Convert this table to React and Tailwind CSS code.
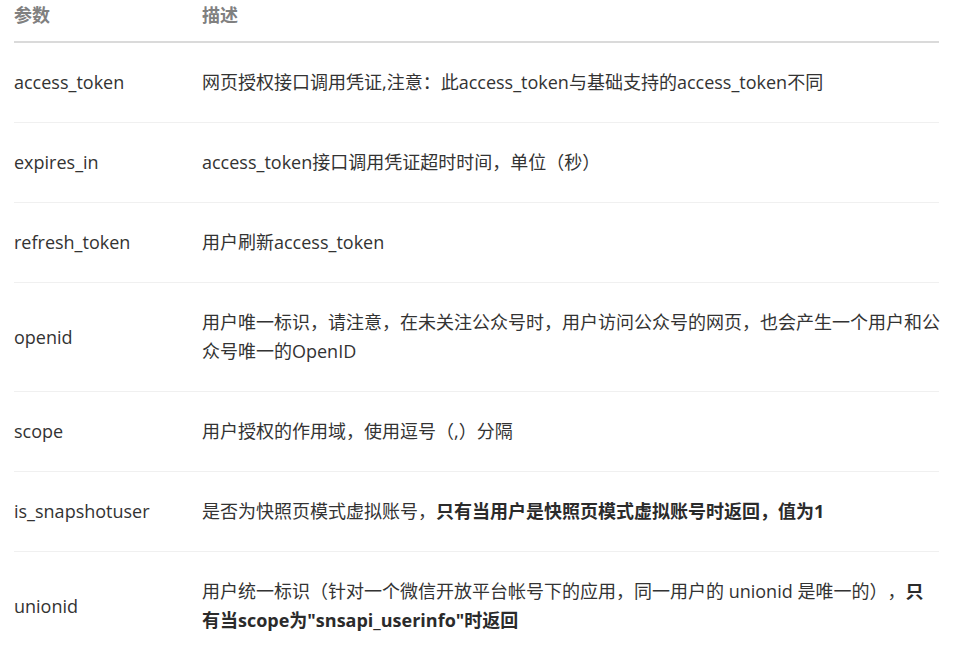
import React from "react";

const rows = [
  {
    name: "access_token",
    desc: <>网页授权接口调用凭证,注意：此access_token与基础支持的access_token不同</>,
  },
  { name: "expires_in", desc: <>access_token接口调用凭证超时时间，单位（秒）</> },
  { name: "refresh_token", desc: <>用户刷新access_token</> },
  {
    name: "openid",
    desc: <>用户唯一标识，请注意，在未关注公众号时，用户访问公众号的网页，也会产生一个用户和公众号唯一的OpenID</>,
  },
  { name: "scope", desc: <>用户授权的作用域，使用逗号（,）分隔</> },
  {
    name: "is_snapshotuser",
    desc: (
      <>
        是否为快照页模式虚拟账号，<b className="font-bold text-[#2b2b2b]">只有当用户是快照页模式虚拟账号时返回，值为1</b>
      </>
    ),
  },
  {
    name: "unionid",
    desc: (
      <>
        用户统一标识（针对一个微信开放平台帐号下的应用，同一用户的 unionid 是唯一的），
        <b className="font-bold text-[#2b2b2b]">
          只<br />有当scope为"snsapi_userinfo"时返回
        </b>
      </>
    ),
  },
];

export default function App() {
  return (
    <div
      className="min-h-screen bg-white text-[18px] leading-[29px] text-[#333] [text-spacing-trim:space-all]"
      style={{ fontFamily: '"Open Sans", "Noto Sans CJK SC", sans-serif' }}
    >
      <div className="ml-[14px] w-[925px]">
        {/* header */}
        <div className="flex border-b-2 border-[#dadada] pt-[1px] pb-[11px] font-bold text-[#808080]">
          <div className="w-[188px] shrink-0">参数</div>
          <div>描述</div>
        </div>
        {rows.map((r) => (
          <div key={r.name} className="flex items-center border-b border-[#f0f0f0] py-[25px]">
            <div className="w-[188px] shrink-0">{r.name}</div>
            <div className="w-[740px] shrink-0 -mr-[3px]">{r.desc}</div>
          </div>
        ))}
      </div>
    </div>
  );
}
